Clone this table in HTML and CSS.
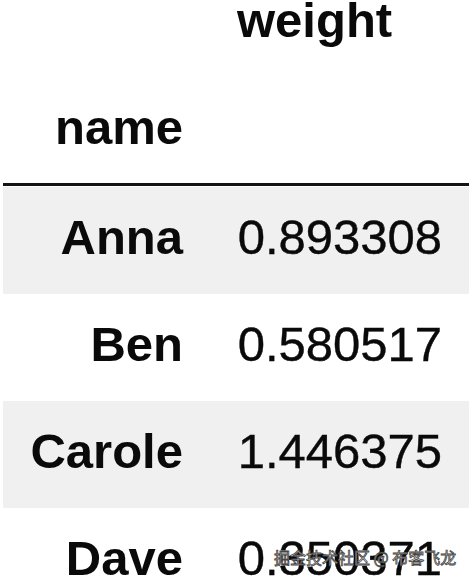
FILE: index.html
```html
<!DOCTYPE html>
<html>
<head>
<meta charset="utf-8">
<link rel="stylesheet" href="styles.css">
</head>
<body>
<div class="frame">
  <div class="df">
    <div class="head">
      <div class="hrow hrow-cols">
        <div class="cell idx"></div>
        <div class="cell colname">weight</div>
      </div>
      <div class="hrow hrow-index">
        <div class="cell idx">name</div>
        <div class="cell colname"></div>
      </div>
    </div>
    <div class="row odd"><div class="cell idx">Anna</div><div class="cell val">0.893308</div></div>
    <div class="row"><div class="cell idx">Ben</div><div class="cell val">0.580517</div></div>
    <div class="row odd"><div class="cell idx">Carole</div><div class="cell val">1.446375</div></div>
    <div class="row"><div class="cell idx">Dave</div><div class="cell val">0.350371</div></div>
  </div>
  <div class="watermark">掘金技术社区 @ 布客飞龙</div>
</div>
</body>
</html>
```
FILE: styles.css
```css
html, body {
  margin: 0;
  padding: 0;
  background: #ffffff;
}
.frame {
  position: relative;
  width: 472px;
  height: 583px;
  overflow: hidden;
  font-family: "Liberation Sans", Arial, sans-serif;
  color: #0a0a0a;
}
.df {
  margin-left: 3px;
  width: 466px;
}
.head {
  border-bottom: 3px solid #141414;
  padding-bottom: 31px;
  margin-bottom: 1px;
}
.hrow, .row {
  display: grid;
  grid-template-columns: 207px 259px;
}
.cell {
  font-size: 49px;
  line-height: 49px;
  padding: 0 27px;
  white-space: nowrap;
}
.hrow .cell {
  font-weight: bold;
}
.hrow-cols .cell {
  margin-top: -4px;
}
.hrow-index {
  margin-top: 58px;
}
.idx {
  font-weight: bold;
  text-align: right;
}
.colname {
  text-align: left;
}
.val {
  text-align: right;
  -webkit-text-stroke: 0.4px #0a0a0a;
}
.row {
  height: 107px;
  box-sizing: border-box;
  padding-top: 26px;
}
.row.odd {
  background: #f0f0f0;
}
.watermark {
  position: absolute;
  left: 274px;
  top: 547px;
  font-family: "Noto Sans CJK SC", sans-serif;
  font-size: 16px;
  line-height: 20px;
  color: #ffffff;
  -webkit-text-stroke: 0.8px #444444;
  white-space: nowrap;
}
```
